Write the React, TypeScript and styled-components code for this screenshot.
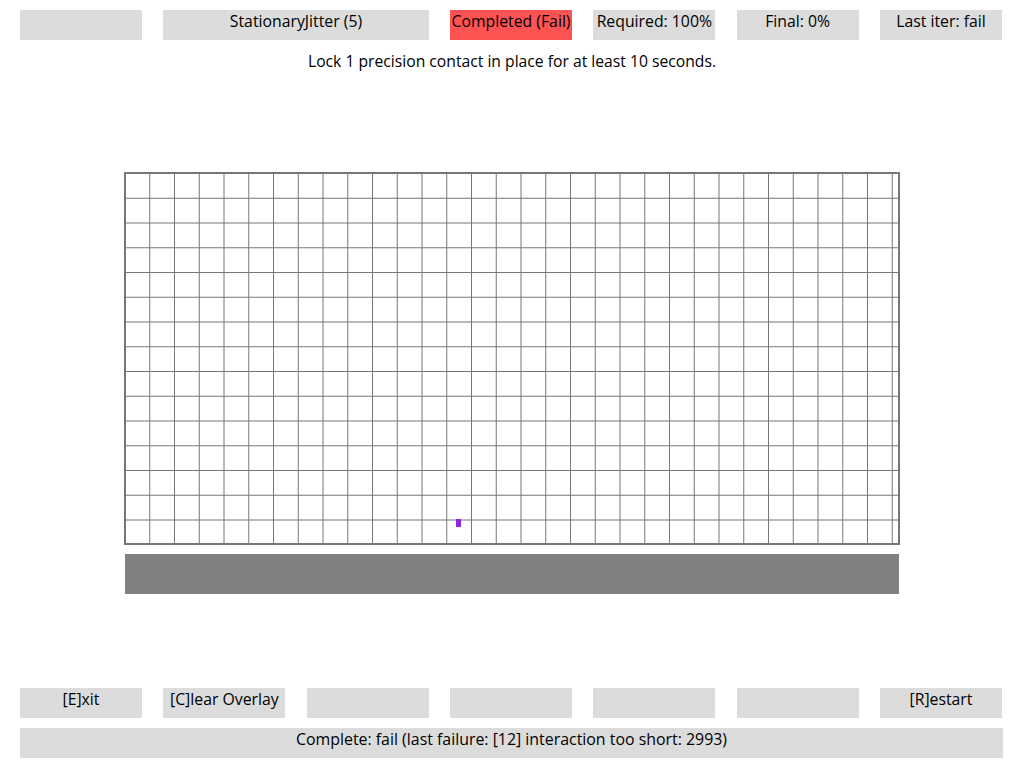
import React from "react";
import styled, { createGlobalStyle } from "styled-components";

const Global = createGlobalStyle`
  html, body { margin: 0; padding: 0; background: #fff; }
  body { font-family: "Open Sans", Lato, sans-serif; color: #000; }
`;

const Page = styled.div`
  width: 1024px;
  height: 768px;
  display: flex;
  flex-direction: column;
  overflow: hidden;
`;

const ButtonRow = styled.div<{ $top: number }>`
  display: grid;
  grid-template-columns: repeat(7, 122px);
  column-gap: 21.33px;
  padding-left: 20px;
  margin-top: ${(p) => p.$top}px;
`;

const Cell = styled.div<{ $red?: boolean; $span?: number }>`
  height: 30px;
  grid-column: span ${(p) => p.$span ?? 1};
  background: ${(p) => (p.$red ? "#ff5252" : "#dcdcdc")};
  font-size: 15.8px;
  line-height: 22px;
  text-align: center;
  white-space: nowrap;
  overflow: hidden;
`;

const Instruction = styled.div`
  margin-top: 10px;
  height: 22px;
  font-size: 15.7px;
  line-height: 22px;
  text-align: center;
`;

const Board = styled.div`
  margin: 100px auto 0;
  width: 776px;
  height: 373px;
`;

const Bar = styled.div`
  margin: 9px auto 0;
  width: 774px;
  height: 40px;
  background: #808080;
`;

const StatusBar = styled.div`
  margin: 10px 21px 0 20px;
  height: 30px;
  background: #dcdcdc;
  font-size: 15.9px;
  line-height: 22px;
  text-align: center;
`;

const S = 24.75;

function GridCanvas() {
  const v: React.ReactNode[] = [];
  for (let i = 1; i <= 31; i++) {
    const x = 1 + i * S;
    v.push(<line key={"v" + i} x1={x} y1={1} x2={x} y2={372} stroke="#777" strokeWidth={1} />);
  }
  for (let j = 1; j < 15; j++) {
    const y = 1.5 + j * S;
    v.push(<line key={"h" + j} x1={1} y1={y} x2={775} y2={y} stroke="#777" strokeWidth={1} />);
  }
  return (
    <svg width={776} height={373} viewBox="0 0 776 373">
      {v}
      <rect x={1} y={1} width={774} height={371} fill="none" stroke="#777" strokeWidth={2} />
      <rect x={332} y={347} width={5} height={8} fill="#8a2be2" />
    </svg>
  );
}

export default function App() {
  return (
    <Page>
      <Global />
      <ButtonRow $top={10}>
        <Cell />
        <Cell $span={2}>StationaryJitter (5)</Cell>
        <Cell $red>Completed (Fail)</Cell>
        <Cell>Required: 100%</Cell>
        <Cell>Final: 0%</Cell>
        <Cell>Last iter: fail</Cell>
      </ButtonRow>
      <Instruction>Lock 1 precision contact in place for at least 10 seconds.</Instruction>
      <Board>
        <GridCanvas />
      </Board>
      <Bar />
      <ButtonRow $top={94}>
        <Cell>[E]xit</Cell>
        <Cell>[C]lear Overlay</Cell>
        <Cell />
        <Cell />
        <Cell />
        <Cell />
        <Cell>[R]estart</Cell>
      </ButtonRow>
      <StatusBar>Complete: fail (last failure: [12] interaction too short: 2993)</StatusBar>
    </Page>
  );
}
